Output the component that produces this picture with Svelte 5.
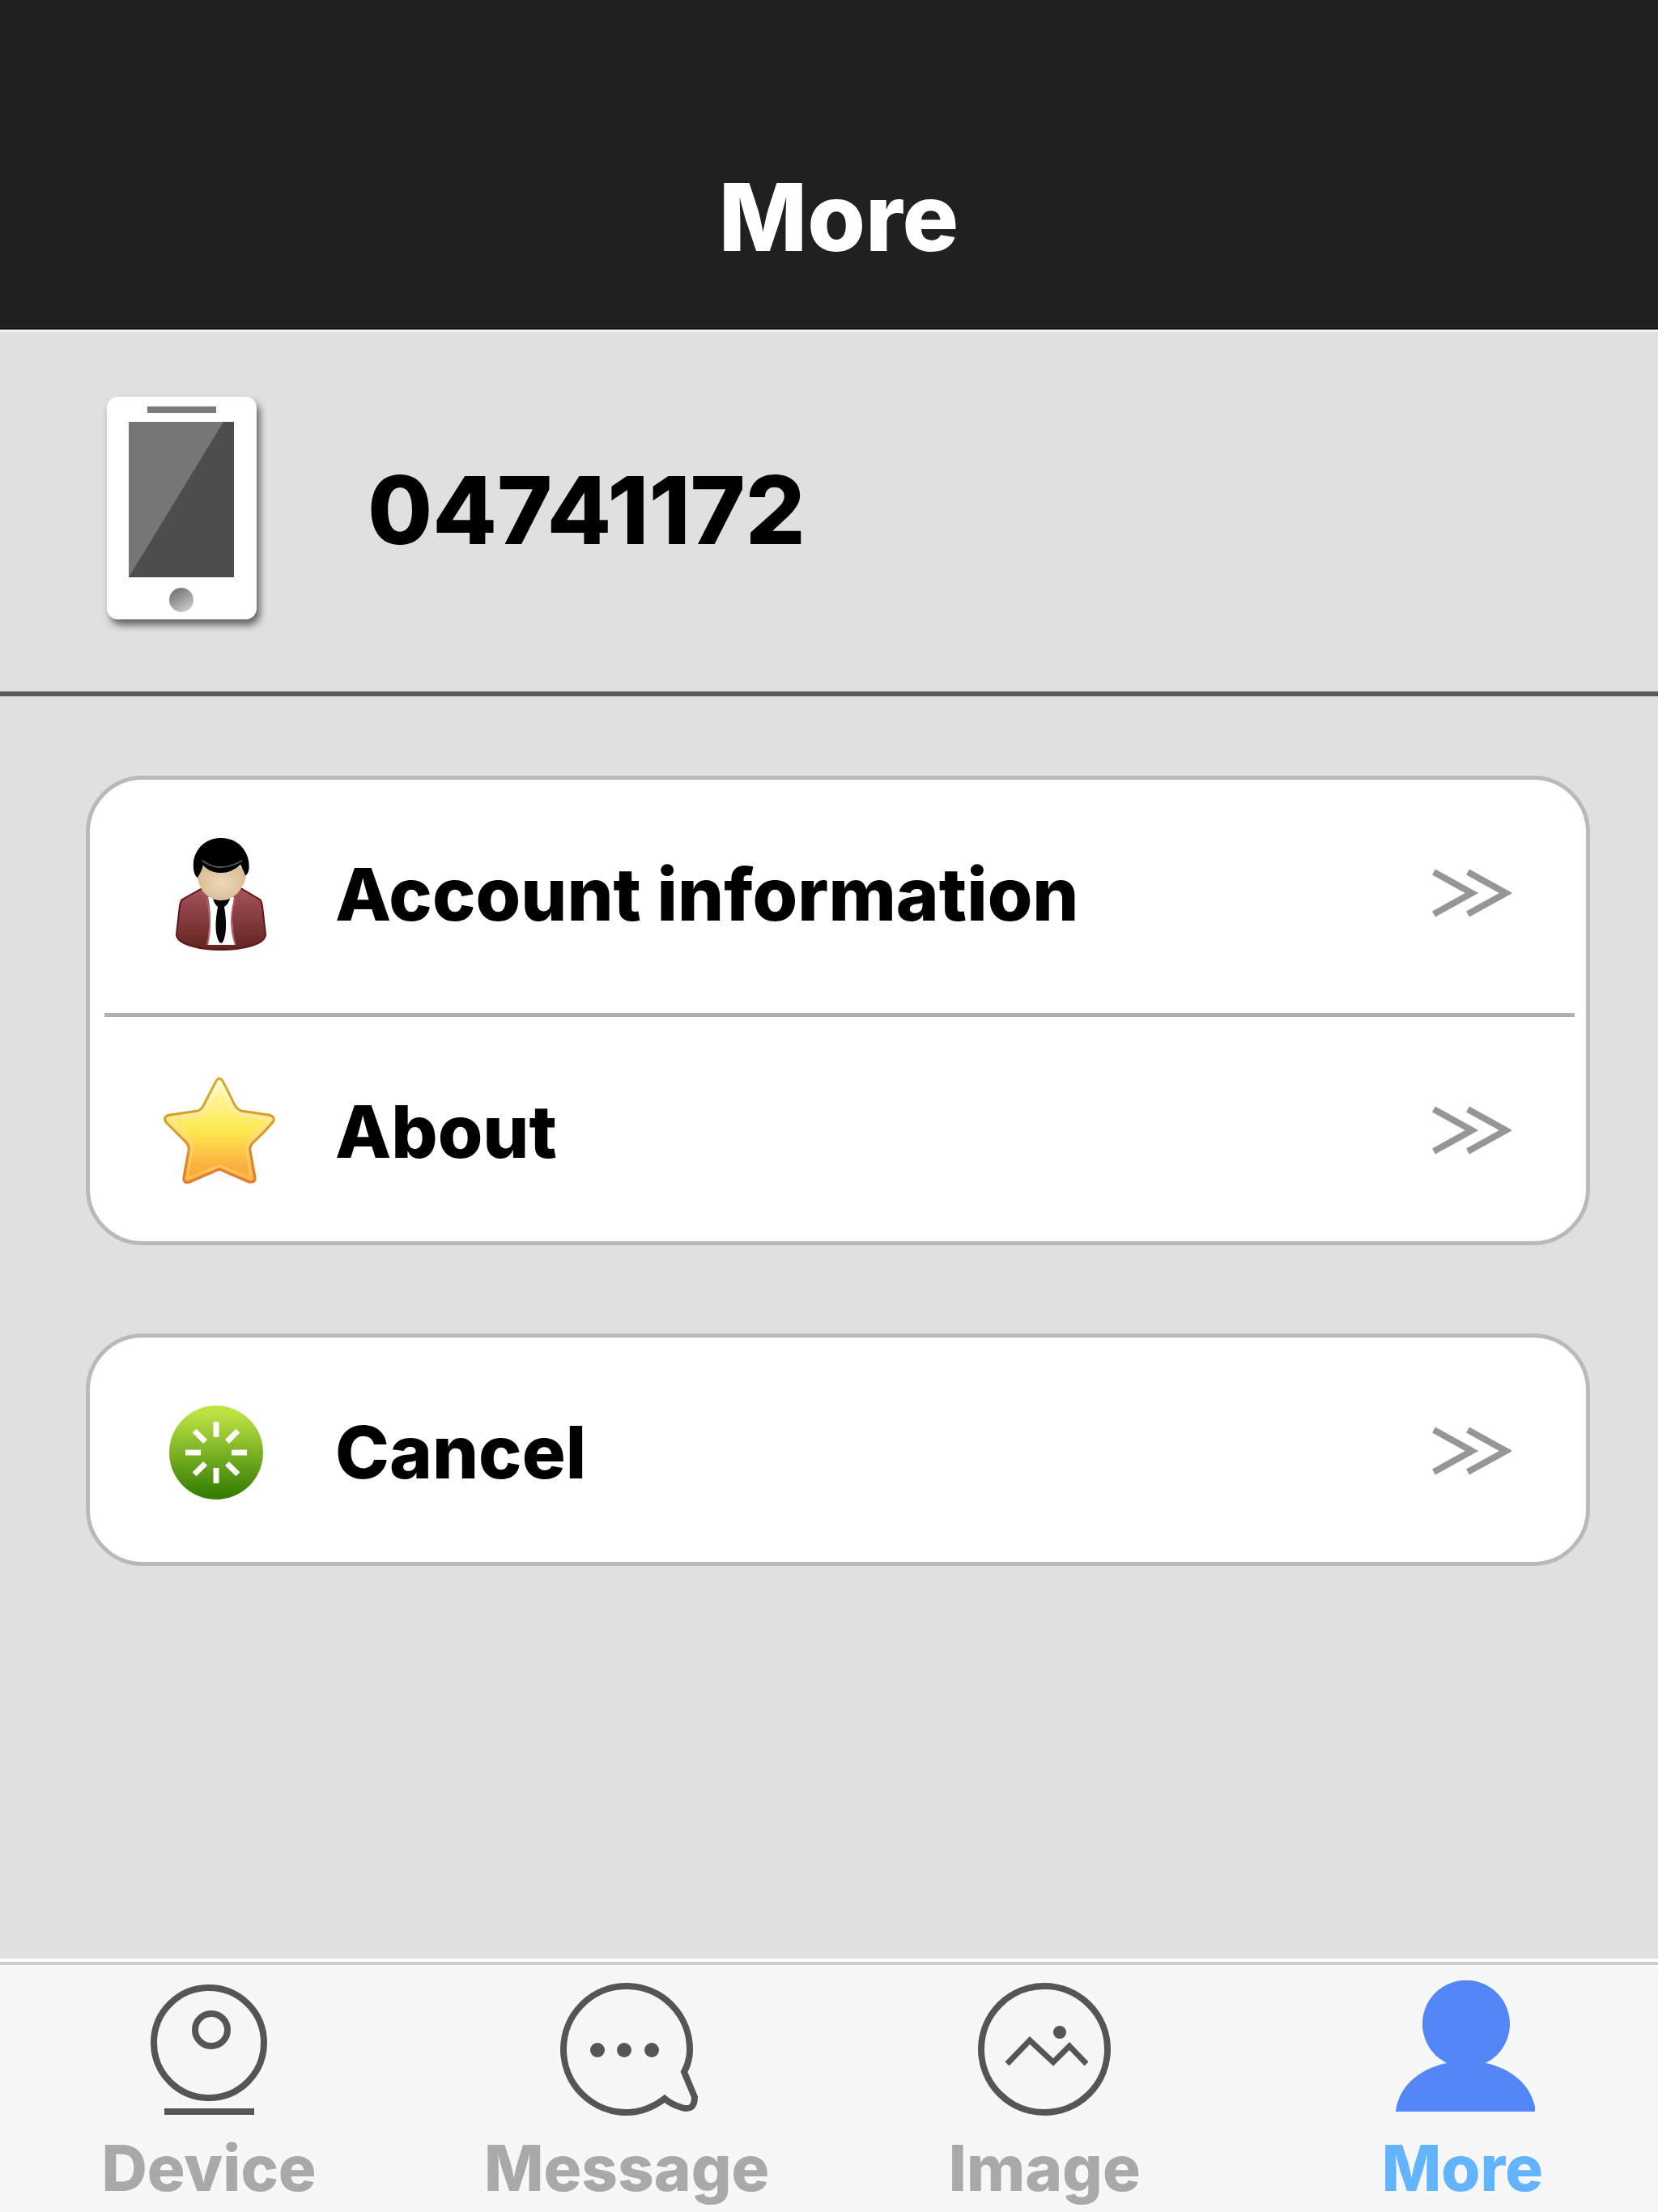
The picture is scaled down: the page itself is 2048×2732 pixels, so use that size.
<script>
  const groups = [
    [
      { icon: 'person', label: 'Account information' },
      { icon: 'star', label: 'About' },
    ],
    [{ icon: 'spinner', label: 'Cancel' }],
  ];

  const tabs = [
    { id: 'device', label: 'Device' },
    { id: 'message', label: 'Message' },
    { id: 'image', label: 'Image' },
    { id: 'more', label: 'More' },
  ];

  const spokes = [0, 45, 90, 135, 180, 225, 270, 315];

  let active = $state('more');
</script>

<div class="page">
  <header class="header">
    <h1>More</h1>
  </header>

  <main>
    <section class="profile">
      <svg class="phone" viewBox="0 0 210 300" aria-hidden="true">
        <defs>
          <linearGradient id="home" x1="0.2" y1="0" x2="0.8" y2="1">
            <stop offset="0" stop-color="#6f6d6d" />
            <stop offset="1" stop-color="#d0d0d0" />
          </linearGradient>
          <filter id="phone-shadow" x="-20%" y="-20%" width="140%" height="140%">
            <feDropShadow dx="4" dy="7" stdDeviation="5" flood-color="#3a3636" flood-opacity="0.75" />
          </filter>
        </defs>
        <rect x="12" y="10" width="185" height="275" rx="14" fill="#fff" filter="url(#phone-shadow)" />
        <rect x="62" y="22" width="85" height="8" fill="#7c7a7a" />
        <rect x="39" y="41" width="130" height="192" fill="#4d4d4d" />
        <path d="M39 41H156L39 233Z" fill="#767676" />
        <circle cx="104" cy="261" r="15" fill="url(#home)" />
      </svg>
      <p class="number">04741172</p>
    </section>

    <div class="groups">
      {#each groups as group}
        <ul class="card">
          {#each group as item}
            <li>
              <button type="button" class="row">
                <svg class="row-icon" viewBox="0 0 144 144" aria-hidden="true">
                  {#if item.icon === 'person'}
                    <defs>
                      <linearGradient id="jacket" x1="0" y1="0" x2="0" y2="1">
                        <stop offset="0" stop-color="#a6535a" />
                        <stop offset="1" stop-color="#612420" />
                      </linearGradient>
                      <radialGradient id="face" cx="0.5" cy="0.55" r="0.55">
                        <stop offset="0" stop-color="#efd8b8" />
                        <stop offset="1" stop-color="#d6bb92" />
                      </radialGradient>
                    </defs>
                    <path d="M48 68L25 81Q23 83 22 89L18 124C18 136 45 143 73 143S128 136 128 124L124 89Q123 83 121 81L99 68Z" fill="url(#jacket)" stroke="#64151b" stroke-width="2" />
                    <path d="M57 78C61 95 60 118 57 137H91C86 117 86 95 89 78Z" fill="#fff" />
                    <path d="M55 79C60 96 60 118 56 137M91 79C85 95 84 117 91 137" fill="none" stroke="#b05c64" stroke-width="2" />
                    <path d="M63 80H84Q82 87 77 90C80 108 80 122 76 132Q73 138 70 132C65 122 66 107 69 90Q65 87 63 80Z" fill="#050505" />
                    <path d="M43 47C44 69 57 82 73 82S102 69 105 47Q88 33 73 34Q57 33 43 47Z" fill="url(#face)" />
                    <path d="M44 54C38 51 37 33 42 24C48 11 60 5 73 5S98 11 104 24C109 33 109 50 103 51Q101 46 97 38Q86 48 73 48Q60 48 51 39Q48 48 44 54Z" fill="#000" />
                    <path d="M50 33Q61 41 73 41T99 33" fill="none" stroke="#555" stroke-width="2" />
                  {:else if item.icon === 'star'}
                    <defs>
                      <linearGradient id="star-fill" x1="0" y1="0" x2="0" y2="1">
                        <stop offset="0" stop-color="#fff8bd" />
                        <stop offset="0.5" stop-color="#fce94f" />
                        <stop offset="0.85" stop-color="#fcaf3e" />
                        <stop offset="1" stop-color="#fca738" />
                      </linearGradient>
                      <linearGradient id="star-edge" x1="0" y1="0" x2="0" y2="1">
                        <stop offset="0" stop-color="#cfae32" />
                        <stop offset="0.5" stop-color="#d39a30" />
                        <stop offset="1" stop-color="#e5782b" />
                      </linearGradient>
                      <linearGradient id="star-glow" x1="0" y1="0" x2="0" y2="1">
                        <stop offset="0" stop-color="#fffce0" />
                        <stop offset="1" stop-color="#ffbc4c" />
                      </linearGradient>
                    </defs>
                    <ellipse cx="71" cy="123" rx="57" ry="13" fill="#fcfcfc" />
                    <g transform="translate(0 1)">
                      <path d="M67 11Q71 5 75 11Q83 26 88 37Q92 46 98 48L132 53Q141 55 137 62Q126 75 115 85Q108 90 109 97L115 130Q116 137 108 136L71 120L34 136Q26 138 27 130L33 97Q34 90 28 85L5 62Q1 54 10 53L44 48Q49 47 53 38Z" fill="url(#star-fill)" stroke="url(#star-edge)" stroke-width="3" stroke-linejoin="round" />
                      <path d="M71 13Q79 28 84 39Q89 50 96 52L132 58Q124 70 111 81Q104 87 105 97L110 132L71 116L31 132L37 97Q38 87 32 81L10 58L46 52Q53 51 58 39Z" fill="none" stroke="url(#star-glow)" stroke-width="3" stroke-linejoin="round" />
                    </g>
                  {:else}
                    <defs>
                      <linearGradient id="green" x1="0" y1="0" x2="0" y2="1">
                        <stop offset="0.08" stop-color="#bde244" />
                        <stop offset="0.95" stop-color="#377f03" />
                      </linearGradient>
                    </defs>
                    <circle cx="67" cy="75" r="58" fill="url(#green)" />
                    {#each spokes as angle}
                      <path d="M67 37V56" stroke="#fff" stroke-width="7" transform="rotate({angle} 67 75)" />
                    {/each}
                  {/if}
                </svg>
                <span class="row-label">{item.label}</span>
                <svg class="chevrons" viewBox="0 0 100 64" aria-hidden="true">
                  <path d="M4 7L51 33L4 59M46 7L93 33L46 59" />
                </svg>
              </button>
            </li>
          {/each}
        </ul>
      {/each}
    </div>
  </main>

  <nav class="tabs">
    {#each tabs as tab}
      <a
        href="#{tab.id}"
        class="tab"
        class:active={active === tab.id}
        aria-current={active === tab.id ? 'page' : undefined}
        onclick={() => (active = tab.id)}
      >
        <svg class="tab-icon" viewBox="0 0 180 180" aria-hidden="true">
          {#if tab.id === 'device'}
            <circle cx="90" cy="83" r="68" />
            <circle cx="93" cy="67" r="20" />
            <path d="M35 168H146" />
          {:else if tab.id === 'message'}
            <path d="M137 152C121 164 106 169 90 169A78 78 0 1 1 168 92Q168 106 161 119L174 150Q174 168 158 163Q145 159 137 152Z" />
            <circle class="solid" cx="54" cy="92" r="9" />
            <circle class="solid" cx="87" cy="92" r="9" />
            <circle class="solid" cx="121" cy="92" r="9" />
          {:else if tab.id === 'image'}
            <circle cx="90" cy="91" r="78" />
            <path class="thin" d="M44 109L72 80L101 107L121 87L142 109" />
            <circle class="solid" cx="109" cy="70" r="8" />
          {:else}
            <path class="figure" d="M71 108A54 54 0 1 1 119 108C151 115 177 135 181 168H8C12 135 39 115 71 108Z" />
          {/if}
        </svg>
        <span>{tab.label}</span>
      </a>
    {/each}
  </nav>
</div>

<style>
  :global(body) {
    margin: 0;
  }

  .page {
    display: flex;
    flex-direction: column;
    min-height: 100vh;
    overflow: hidden;
    background: #e0e0e0;
    color: #000;
    font-family: Inter, 'Liberation Sans', sans-serif;
    font-weight: 800;
  }

  .header {
    padding: 200px 0 69px 24px;
    background: #202020;
    border-bottom: 2px solid #111;
    color: #fff;
    text-align: center;
  }

  h1,
  .number {
    margin: 0;
    font-size: 116px;
    line-height: 136px;
    font-weight: 800;
  }

  main {
    flex: 1;
  }

  .profile {
    display: flex;
    align-items: center;
    gap: 124px;
    padding: 70px 120px 74px;
    border-top: 3px solid #f2f2f2;
    border-bottom: 6px solid #5c5c5c;
  }

  .phone {
    flex: none;
    width: 210px;
    height: 300px;
  }

  .groups {
    display: flex;
    flex-direction: column;
    gap: 109px;
    padding: 98px 84px 98px 106px;
  }

  .card {
    margin: 0;
    padding: 0;
    border: 5px solid #b9b9b9;
    border-radius: 70px;
    background: #fff;
    list-style: none;
  }

  li:not(:last-child) {
    margin: 0 14px 0 18px;
    padding-bottom: 11px;
    border-bottom: 5px solid #b0b0b0;
  }

  li:not(:last-child) .row {
    padding: 0 78px 0 71px;
  }

  .row {
    display: flex;
    align-items: center;
    width: 100%;
    height: 277px;
    padding: 0 92px 0 89px;
    border: 0;
    background: none;
    color: inherit;
    font: inherit;
    text-align: left;
    cursor: pointer;
  }

  .row-icon {
    flex: none;
    width: 144px;
    height: 144px;
  }

  .row-label {
    flex: 1;
    padding: 6px 0 0 70px;
    font-size: 90px;
    line-height: 104px;
  }

  .chevrons {
    flex: none;
    width: 100px;
    height: 64px;
    fill: none;
    stroke: #969696;
    stroke-width: 8px;
  }

  .tabs {
    display: grid;
    grid-template-columns: repeat(4, 25.2%);
    padding: 13px 0 10px;
    border-top: 4px solid #ccc;
    background: #f7f7f7;
    box-shadow: 0 -4px #fff;
  }

  .tab {
    display: flex;
    flex-direction: column;
    align-items: center;
    gap: 14px;
    color: #a9a9a9;
    font-size: 78px;
    line-height: 88px;
    text-decoration: none;
  }

  .tab.active {
    color: #62b4ff;
  }

  .tab-icon {
    width: 180px;
    height: 180px;
    fill: none;
    stroke: #555;
    stroke-width: 8px;
  }

  .thin {
    stroke-width: 7px;
  }

  .solid {
    fill: #555;
    stroke: none;
  }

  .figure {
    fill: #5487f6;
    stroke: none;
  }
</style>
